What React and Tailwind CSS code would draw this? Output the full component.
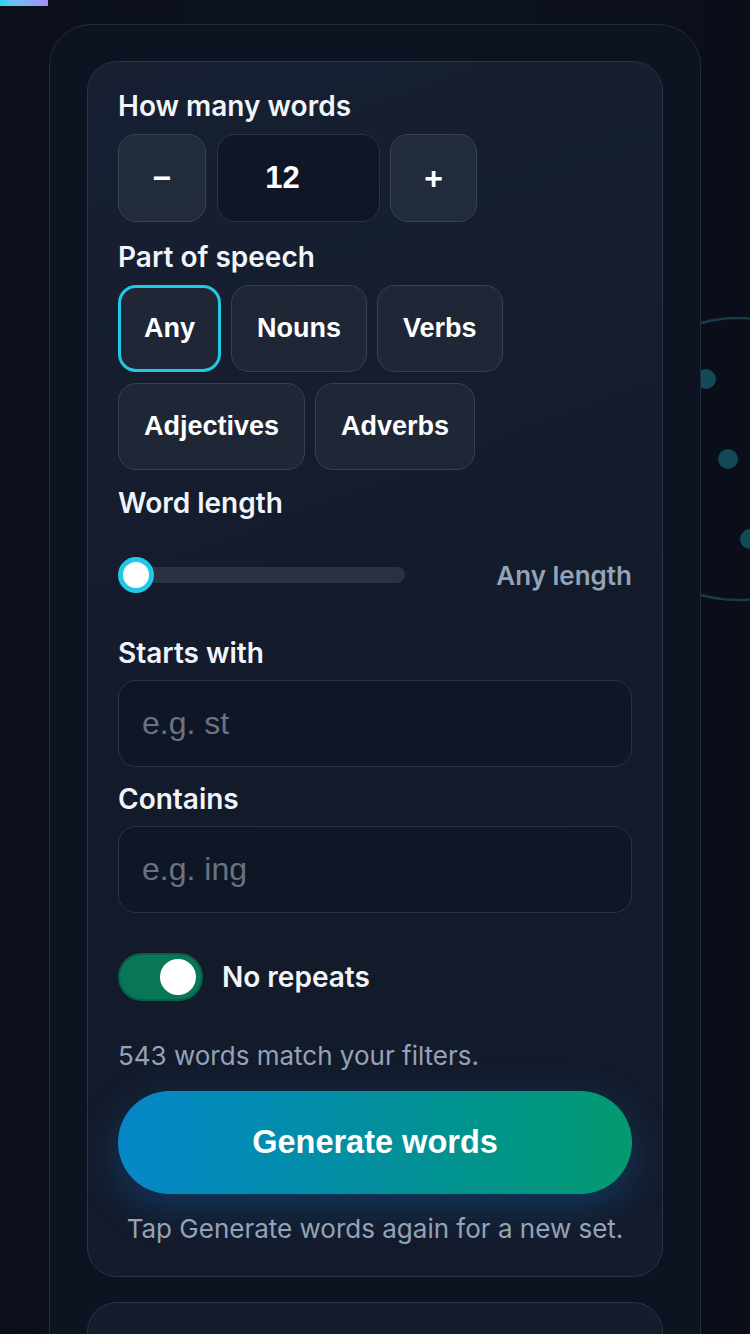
import { useState } from "react";

const label = "text-[28px] leading-[34px] font-semibold text-[#f1f5f9]";
const arial = "font-['Liberation_Sans',Arial,sans-serif]";

const parts = ["Any", "Nouns", "Verbs", "Adjectives", "Adverbs"];

// Decorative ring + dots peeking out behind the right edge of the panel
const Orbit = () => (
  <svg
    className="absolute left-0 top-0 pointer-events-none"
    width="750"
    height="700"
    viewBox="0 0 750 700"
    fill="none"
  >
    <circle cx="738" cy="459" r="141" stroke="#153d4a" strokeWidth="2.5" />
    <circle cx="706" cy="379" r="10" fill="#134a58" />
    <circle cx="728" cy="459" r="10" fill="#134a58" />
    <circle cx="750" cy="539" r="10" fill="#134a58" />
  </svg>
);

const Stepper = ({ value, setValue }) => (
  <div className="flex items-center">
    <button
      onClick={() => setValue(Math.max(1, value - 1))}
      className={`w-[88px] h-[88px] rounded-[18px] bg-[#222b3b] border border-[#384356] text-white text-[32px] font-bold ${arial}`}
    >
      −
    </button>
    <div
      className={`ml-[11px] w-[163px] h-[88px] rounded-[18px] bg-[#0f1626] border border-[#2b3445] flex items-center justify-center pr-[32px] text-white text-[31px] font-bold ${arial}`}
    >
      {value}
    </div>
    <button
      onClick={() => setValue(value + 1)}
      className={`ml-[10px] w-[87px] h-[88px] rounded-[18px] bg-[#222b3b] border border-[#384356] text-white text-[32px] font-bold ${arial}`}
    >
      +
    </button>
  </div>
);

const TextField = ({ placeholder }) => (
  <input
    placeholder={placeholder}
    className={`w-full h-[87px] rounded-[18px] bg-[#0f1626] border border-[#2b3445] px-[23px] text-[32px] text-white placeholder:text-[#6b7280] outline-none ${arial}`}
  />
);

export default function App() {
  const [count, setCount] = useState(12);
  const [part, setPart] = useState("Any");
  const [noRepeats, setNoRepeats] = useState(true);

  return (
    <div className="relative min-h-screen overflow-hidden bg-[linear-gradient(90deg,#0a0f19_0%,#0d1321_50%,#0a0e18_100%)] font-['Inter',sans-serif]">
      {/* progress strip */}
      <div className="absolute left-0 top-0 h-[6px] w-[48px] bg-gradient-to-r from-[#22d3ee] to-[#a78bfa]" />
      <Orbit />

      <div className="relative pt-[24px] px-[49px]">
        <div className="rounded-[42px] border border-[#222c3c] bg-[#0d1320] pt-[36px] px-[37px] pb-[200px]">
          {/* main form card */}
          <div className="rounded-[30px] border border-[#2a3445] bg-[linear-gradient(160deg,#172032_0%,#131a2a_60%,#141b2b_100%)] px-[30px] pt-[27px] pb-[30px]">
            <div className={label}>How many words</div>
            <div className="mt-[11px]">
              <Stepper value={count} setValue={setCount} />
            </div>

            <div className={`${label} mt-[18px]`}>Part of speech</div>
            <div className="mt-[11px] flex flex-wrap gap-x-[10px] gap-y-[11px] w-[400px]">
              {parts.map((p) => (
                <button
                  key={p}
                  onClick={() => setPart(p)}
                  className={`h-[87px] rounded-[18px] bg-[#1f2737] text-white text-[27px] font-bold ${arial} ${
                    part === p
                      ? "border-[3px] border-[#22c8e5] px-[23px]"
                      : "border border-[#374153] px-[25px]"
                  }`}
                >
                  {p}
                </button>
              ))}
            </div>

            <div className={`${label} mt-[16px]`}>Word length</div>
            <div className="mt-[31px] h-[48px] flex items-center justify-between">
              <div className="relative w-[287px] h-[16px] rounded-full bg-[#2a3241]">
                <div className="absolute left-0 top-1/2 -translate-y-1/2 w-[36px] h-[36px] rounded-full bg-white border-[5px] border-[#22c8e5]" />
              </div>
              <span className="text-[26px] font-semibold text-[#94a3b8]">Any length</span>
            </div>

            <div className={`${label} mt-[37px]`}>Starts with</div>
            <div className="mt-[10px]">
              <TextField placeholder="e.g. st" />
            </div>

            <div className={`${label} mt-[15px]`}>Contains</div>
            <div className="mt-[10px]">
              <TextField placeholder="e.g. ing" />
            </div>

            <div className="mt-[40px] flex items-center gap-[19px]">
              <button
                onClick={() => setNoRepeats(!noRepeats)}
                className={`w-[85px] h-[48px] rounded-full border-2 flex items-center px-[5px] ${
                  noRepeats
                    ? "bg-[#077758] border-[#0b5f49] justify-end"
                    : "bg-[#2a3241] border-[#384356] justify-start"
                }`}
              >
                <span className="w-[36px] h-[36px] rounded-full bg-white" />
              </button>
              <span className={label}>No repeats</span>
            </div>

            <div className="mt-[38px] text-[26px] leading-[34px] text-[#94a3b8]">
              543 words match your filters.
            </div>

            <button
              className={`mt-[18px] w-full h-[103px] rounded-full bg-gradient-to-r from-[#0787c9] via-[#048f9e] to-[#059a6f] text-white text-[32.5px] font-bold shadow-[0_12px_40px_rgba(14,116,200,0.35)] ${arial}`}
            >
              Generate words
            </button>

            <div className="mt-[18px] text-center text-[26px] leading-[34px] text-[#94a3b8]">
              Tap Generate words again for a new set.
            </div>
          </div>

          {/* results card (below the fold) */}
          <div className="mt-[25px] h-[240px] rounded-[30px] border border-[#2a3445] bg-[#151c2c]" />
        </div>
      </div>
    </div>
  );
}
